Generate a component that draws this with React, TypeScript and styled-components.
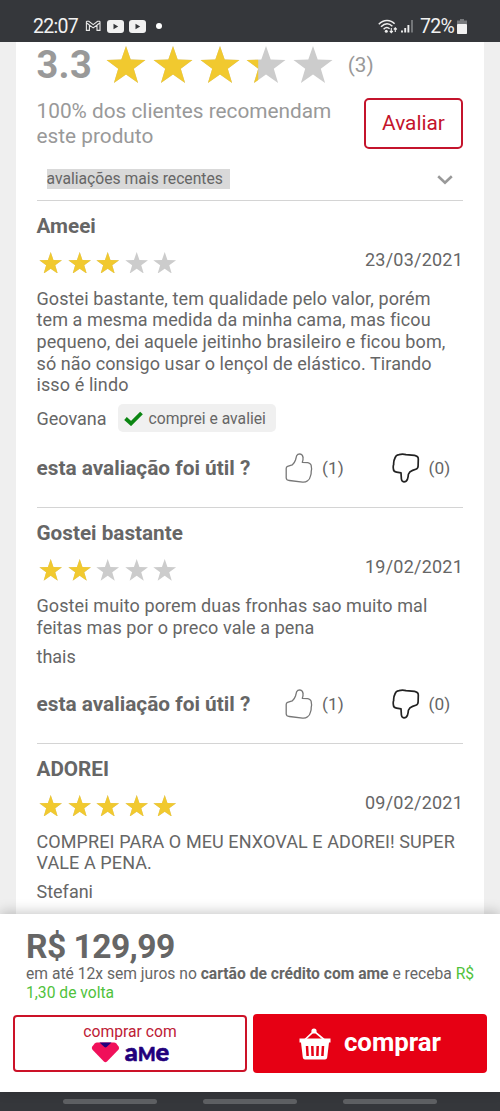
import React from 'react';
import styled, { createGlobalStyle } from 'styled-components';

const GlobalStyle = createGlobalStyle`
  * { box-sizing: border-box; }
  body {
    margin: 0;
    background: #efefef;
    font-family: Roboto, 'Liberation Sans', sans-serif;
    color: #666;
  }
`;

const Screen = styled.div`
  width: 500px;
  height: 1111px;
  display: flex;
  flex-direction: column;
  overflow: hidden;
  background: #efefef;
`;

const StatusBar = styled.header`
  flex: none;
  height: 42px;
  padding: 10px 33px 0 33px;
  display: flex;
  align-items: center;
  justify-content: space-between;
  background: #35373b;
  color: #f1f1f1;
  font-size: 19.5px;
`;

const StatusGroup = styled.div<{ $gap: number }>`
  display: flex;
  align-items: center;
  gap: ${(p) => p.$gap}px;
`;

const StatusText = styled.span<{ $spacing: number }>`
  letter-spacing: ${(p) => p.$spacing}px;
  white-space: nowrap;
`;

const Dot = styled.span`
  width: 6px;
  height: 6px;
  margin-left: 3px;
  border-radius: 50%;
  background: #fff;
`;

const Content = styled.main`
  flex: 1;
  min-height: 0;
  overflow: hidden;
  margin: 0 16px;
  padding: 0 21px 0 20.5px;
  background: #fff;
`;

const Summary = styled.section`
  height: 45px;
  display: flex;
  align-items: center;
`;

const Score = styled.strong`
  width: 69.5px;
  font-size: 38px;
  line-height: 44px;
  letter-spacing: 0.3px;
  color: #999;
`;

const Stars = styled.div<{ $gap: number }>`
  display: flex;
  gap: ${(p) => p.$gap}px;
  svg { display: block; }
`;

const RatingCount = styled.span`
  margin-left: 14.5px;
  font-size: 20.7px;
  color: #999;
`;

const Recommendation = styled.section`
  height: 82px;
  display: flex;
  justify-content: space-between;
`;

const RecommendText = styled.p`
  margin: 12px 0 0;
  font-size: 20.8px;
  line-height: 24.5px;
  color: #999;
  white-space: nowrap;
`;

const RateButton = styled.button`
  width: 99px;
  height: 51px;
  margin-top: 10.5px;
  padding: 0;
  border: 2px solid #c4142c;
  border-radius: 5px;
  background: #fff;
  color: #c4142c;
  font: 400 20.8px Roboto, sans-serif;
`;

const SortSelect = styled.div`
  height: 30.5px;
  padding: 0 10px 11px 10px;
  display: flex;
  align-items: center;
  justify-content: space-between;
`;

const SortLabel = styled.span`
  width: 183px;
  height: 20px;
  background: #d9d9d9;
  font-size: 15.7px;
  line-height: 20px;
  white-space: nowrap;
`;

const SortArrow = styled.svg`
  margin-top: 3px;
`;

const ReviewItem = styled.article`
  border-top: 1px solid #d4d4d4;
  padding: 11px 0 19px;
`;

const ReviewTitle = styled.h3`
  margin: 0;
  font-size: 20.7px;
  line-height: 28px;
  font-weight: 700;
`;

const ReviewMeta = styled.div`
  height: 46px;
  padding-left: 2.5px;
  display: flex;
  align-items: center;
  justify-content: space-between;
`;

const ReviewDate = styled.time`
  margin-top: -7px;
  font-size: 18px;
  letter-spacing: 0.22px;
`;

const ReviewText = styled.p`
  margin: 2px 0 0;
  font-size: 18px;
  line-height: 21.7px;
  letter-spacing: 0.1px;
  white-space: nowrap;
`;

const Author = styled.div<{ $verified: boolean }>`
  height: ${(p) => (p.$verified ? 28 : 22)}px;
  margin-top: ${(p) => (p.$verified ? 8.1 : 7)}px;
  display: flex;
  align-items: center;
  gap: 11px;
  font-size: 18px;
`;

const VerifiedBadge = styled.span`
  width: 158px;
  height: 28px;
  padding-left: 6px;
  display: flex;
  align-items: center;
  gap: 6px;
  border-radius: 5px;
  background: #f0f0f0;
  font-size: 15.7px;
  white-space: nowrap;
`;

const Helpful = styled.div`
  height: 40px;
  margin-top: 16px;
  display: grid;
  grid-template-columns: 248.5px 106.5px 1fr;
  align-items: center;
`;

const HelpfulLabel = styled.strong`
  font-size: 20.8px;
  white-space: nowrap;
`;

const Vote = styled.span`
  display: flex;
  align-items: center;
  gap: 9px;
  font-size: 17.3px;
`;

const BuyPanel = styled.footer`
  flex: none;
  position: relative;
  height: 178px;
  padding: 17px 13px 0;
  background: #fff;
  box-shadow: 0 -2px 12px rgba(0, 0, 0, 0.22);
`;

const Price = styled.div`
  padding-left: 13px;
  font-size: 33.6px;
  line-height: 32px;
  font-weight: 700;
  letter-spacing: -0.55px;
`;

const Offer = styled.p`
  margin: 2px 0 0;
  padding-left: 13px;
  font-size: 15.65px;
  line-height: 18.5px;
  white-space: nowrap;
`;

const Cashback = styled.span`
  color: #50c23c;
`;

const Actions = styled.div`
  margin-top: 12px;
  display: flex;
  gap: 6px;
`;

const AmeButton = styled.button`
  width: 234px;
  height: 57px;
  margin-top: 1px;
  padding: 0;
  border: 2px solid #cc1228;
  border-radius: 4px;
  background: #fff;
  color: #bd2036;
  font: 400 15.7px/16px Roboto, sans-serif;
`;

const AmeBrand = styled.span`
  display: flex;
  align-items: center;
  justify-content: center;
  gap: 5px;
  height: 22px;
  margin-top: 2px;
`;

const AmeName = styled.span`
  display: flex;
  align-items: baseline;
  padding-bottom: 1px;
  font: 900 25.5px/20px Lato, sans-serif;
  color: #22007c;
  -webkit-text-stroke: 0.6px #22007c;
`;

const AmeMiddle = styled.span`
  font-size: 18.5px;
  text-transform: uppercase;
`;

const BuyButton = styled.button`
  width: 234px;
  height: 59px;
  padding: 0 1px 0 0;
  display: flex;
  align-items: center;
  justify-content: center;
  gap: 12px;
  border: 0;
  border-radius: 4px;
  background: #e60014;
  color: #fff;
  font: 700 25.8px Roboto, sans-serif;
`;

const BuyLabel = styled.span`
  padding-bottom: 3px;
`;

const NavBar = styled.nav`
  flex: none;
  height: 19px;
  display: flex;
  justify-content: center;
  gap: 46px;
  padding-top: 7px;
  background: #35373b;
`;

const NavHandle = styled.span`
  width: 94px;
  height: 5px;
  border-radius: 3px;
  background: #5e6063;
`;

const STAR = 'M20 0 L24.7 13.6 L39.5 13.9 L27.8 22.7 L32.1 37 L20 28.5 L7.9 37 L12.2 22.7 L0.5 13.9 L15.3 13.6 Z';

function Star({ fill, width }: { fill: number; width: number }) {
  return (
    <svg width={width} height={width * 0.925} viewBox="0 0 40 37">
      <path d={STAR} fill="#ccc" />
      {fill > 0 && (
        <path d={STAR} fill="#f1c92f" style={{ clipPath: `inset(0 ${(1 - fill) * 100}% 0 0)` }} />
      )}
    </svg>
  );
}

function Rating({ value, size, gap }: { value: number; size: number; gap: number }) {
  return (
    <Stars $gap={gap}>
      {[0, 1, 2, 3, 4].map((i) => (
        <Star key={i} width={size} fill={Math.max(0, Math.min(1, value - i))} />
      ))}
    </Stars>
  );
}

const THUMB =
  'M1.2 15.5 Q1.2 14 2.6 13.4 L7.2 11.9 Q9.6 9.8 10.5 7 L11.6 2.8 Q12.6 .8 14.8 .8 Q18 1.4 18 4.4 Q18.3 7 17.3 9.3 L22.8 9.7 Q26.4 10.6 26.3 13.6 Q27 16 26.2 18.5 Q26.4 21.4 25.3 23.5 Q24.8 26.4 22.6 27.7 Q20.6 29.3 17.6 29.1 L4.4 27.5 Q1.4 27.4 1.2 25 Z';

const THUMB_DOWN =
  'M3 5 Q3.8 2 7 1.6 Q10.5 .8 14 1.6 L22.6 2.4 Q26.3 3.2 26.3 6 L26.1 13 Q26 15.6 23.8 16.3 L20.6 17.4 Q17.4 18.6 16.4 21.2 Q16.2 24 15.4 26.4 Q14.4 28.8 12 28.8 Q9.6 28.4 9.4 26 L9 19.9 L4.6 19.2 Q1.3 18.6 1.4 15.8 Q.9 13.4 1.7 11.2 Q1.4 8 3 5 Z';

function Thumb({ down }: { down?: boolean }) {
  return (
    <svg width="28" height="30" viewBox="0 0 28 30" fill="none">
      <path
        d={down ? THUMB_DOWN : THUMB}
        stroke={down ? '#222' : '#777'}
        strokeWidth={down ? 1.7 : 1.3}
        strokeLinejoin="round"
      />
    </svg>
  );
}

function VideoIcon() {
  return (
    <svg width="17" height="13" viewBox="0 0 17 13">
      <rect width="17" height="13" rx="3" fill="#f1f1f1" />
      <path d="M6.5 3.8 L11.2 6.5 L6.5 9.2 Z" fill="#35373b" />
    </svg>
  );
}

interface Review {
  title: string;
  stars: number;
  date: string;
  lines: string[];
  author: string;
  verified?: boolean;
  votes?: { up: number; down: number };
}

const reviews: Review[] = [
  {
    title: 'Ameei',
    stars: 3,
    date: '23/03/2021',
    lines: [
      'Gostei bastante, tem qualidade pelo valor, porém',
      'tem a mesma medida da minha cama, mas ficou',
      'pequeno, dei aquele jeitinho brasileiro e ficou bom,',
      'só não consigo usar o lençol de elástico. Tirando',
      'isso é lindo',
    ],
    author: 'Geovana',
    verified: true,
    votes: { up: 1, down: 0 },
  },
  {
    title: 'Gostei bastante',
    stars: 2,
    date: '19/02/2021',
    lines: ['Gostei muito porem duas fronhas sao muito mal', 'feitas mas por o preco vale a pena'],
    author: 'thais',
    votes: { up: 1, down: 0 },
  },
  {
    title: 'ADOREI',
    stars: 5,
    date: '09/02/2021',
    lines: ['COMPREI PARA O MEU ENXOVAL E ADOREI! SUPER', 'VALE A PENA.'],
    author: 'Stefani',
  },
];

function ReviewCard({ review }: { review: Review }) {
  return (
    <ReviewItem>
      <ReviewTitle>{review.title}</ReviewTitle>
      <ReviewMeta>
        <Rating value={review.stars} size={23.4} gap={5.2} />
        <ReviewDate>{review.date}</ReviewDate>
      </ReviewMeta>
      <ReviewText>
        {review.lines.map((line, i) => (
          <React.Fragment key={line}>
            {i > 0 && <br />}
            {line}
          </React.Fragment>
        ))}
      </ReviewText>
      <Author $verified={!!review.verified}>
        {review.author}
        {review.verified && (
          <VerifiedBadge>
            <svg width="19" height="15" viewBox="0 0 19 15">
              <path d="M1.5 7.5 L7 12.5 L17.5 2" fill="none" stroke="#0b8512" strokeWidth="3.8" />
            </svg>
            comprei e avaliei
          </VerifiedBadge>
        )}
      </Author>
      {review.votes && (
        <Helpful>
          <HelpfulLabel>esta avaliação foi útil ?</HelpfulLabel>
          <Vote>
            <Thumb /> ({review.votes.up})
          </Vote>
          <Vote>
            <Thumb down /> ({review.votes.down})
          </Vote>
        </Helpful>
      )}
    </ReviewItem>
  );
}

export default function App() {
  return (
    <Screen>
      <GlobalStyle />
      <StatusBar>
        <StatusGroup $gap={7}>
          <StatusText $spacing={-0.7}>22:07</StatusText>
          <StatusGroup $gap={5}>
            <svg width="17" height="12" viewBox="0 0 17 12" fill="none" stroke="#e8e8e8" strokeWidth="1.1">
              <path d="M2 1.2 H3.8 L8.2 4.6 L12.6 1.2 H14.4 L15 1.8 V10.4 H12 V5 L8.2 7.9 L4.4 5 V10.4 H1.4 V1.8 Z M1.6 3 L4.4 5 M14.8 3 L12 5" />
            </svg>
            <VideoIcon />
            <VideoIcon />
          </StatusGroup>
          <Dot />
        </StatusGroup>
        <StatusGroup $gap={6}>
          <svg width="36" height="15" viewBox="0 0 36 15" fill="none" stroke="#eee" strokeWidth="1.5">
            <path d="M.8 5.2 C5.5 .2 12.5 .2 16.6 4.8 M3 7.8 C6.8 4 11 4 14.4 7.3 M5.6 10.2 C7.6 8.2 10 8.2 11.6 9.8" />
            <circle cx="8.3" cy="12.2" r="1.5" fill="#eee" stroke="none" />
            <path d="M13.3 9 V13.4 M11.8 12 L13.3 13.6 L14.8 12 M17.3 13 V9 M15.8 10.5 L17.3 8.9 L18.8 10.5" strokeWidth="1.1" />
            <path d="M24 13.6 V11.5 M27.2 13.6 V9 M30.4 13.6 V6" strokeWidth="1.9" />
            <path d="M34 13.6 V1" stroke="#77797c" strokeWidth="1.9" />
          </svg>
          <StatusGroup $gap={3}>
            <StatusText $spacing={-0.7}>72%</StatusText>
            <svg width="10" height="15" viewBox="0 0 10 15">
              <path d="M3 0 H7 V1.5 H10 V15 H0 V1.5 H3 Z" fill="#77797c" />
              <rect y="5" width="10" height="10" rx="1" fill="#f1f1f1" />
            </svg>
          </StatusGroup>
        </StatusGroup>
      </StatusBar>

      <Content>
        <Summary>
          <Score>3.3</Score>
          <Rating value={3.3} size={40} gap={6.8} />
          <RatingCount>(3)</RatingCount>
        </Summary>
        <Recommendation>
          <RecommendText>
            100% dos clientes recomendam
            <br />
            este produto
          </RecommendText>
          <RateButton>Avaliar</RateButton>
        </Recommendation>
        <SortSelect>
          <SortLabel>avaliações mais recentes</SortLabel>
          <SortArrow width="16" height="10" viewBox="0 0 16 10">
            <path d="M1.2 1.2 L8 7.6 L14.8 1.2" fill="none" stroke="#999" strokeWidth="2.6" />
          </SortArrow>
        </SortSelect>
        {reviews.map((review) => (
          <ReviewCard key={review.title} review={review} />
        ))}
      </Content>

      <BuyPanel>
        <Price>R$ 129,99</Price>
        <Offer>
          em até 12x sem juros no <b>cartão de crédito com ame</b> e receba <Cashback>R$</Cashback>
          <br />
          <Cashback>1,30 de volta</Cashback>
        </Offer>
        <Actions>
          <AmeButton>
            comprar com
            <AmeBrand>
              <svg width="29" height="21" viewBox="0 0 29 21">
                <path
                  d="M6 .5 H23 Q24.3 .5 25.3 1.6 L27.6 4.6 Q28.8 6.2 27.4 7.7 L16 19.6 Q14.4 21 12.9 19.6 L1.5 7.7 Q.1 6.2 1.3 4.6 L3.7 1.6 Q4.7 .5 6 .5 Z"
                  fill="#f0105a"
                />
                <path d="M8.5 .5 H20.5 L15.6 5 Q14.5 5.9 13.4 5 Z" fill="#22007c" />
              </svg>
              <AmeName>
                a<AmeMiddle>m</AmeMiddle>e
              </AmeName>
            </AmeBrand>
          </AmeButton>
          <BuyButton>
            <svg width="34" height="32" viewBox="0 0 34 32" fill="none" stroke="#fff">
              <path d="M7 11.5 L16 3.2 L26 11.5" strokeWidth="1.7" />
              <circle cx="16" cy="3" r="2.6" fill="#fff" stroke="none" />
              <path
                d="M1.5 10.5 H32.5 V14.5 H31 L29.2 29.5 Q28.9 31.5 27 31.5 H7 Q5.1 31.5 4.8 29.5 L3 14.5 H1.5 Z"
                fill="#fff"
                stroke="none"
              />
              <path d="M9 18 L9.6 28 M14.3 18 L14.6 28 M19.7 18 L19.4 28 M25 18 L24.4 28" stroke="#e60014" strokeWidth="2.5" />
            </svg>
            <BuyLabel>comprar</BuyLabel>
          </BuyButton>
        </Actions>
      </BuyPanel>
      <NavBar>
        <NavHandle />
        <NavHandle />
        <NavHandle />
      </NavBar>
    </Screen>
  );
}
